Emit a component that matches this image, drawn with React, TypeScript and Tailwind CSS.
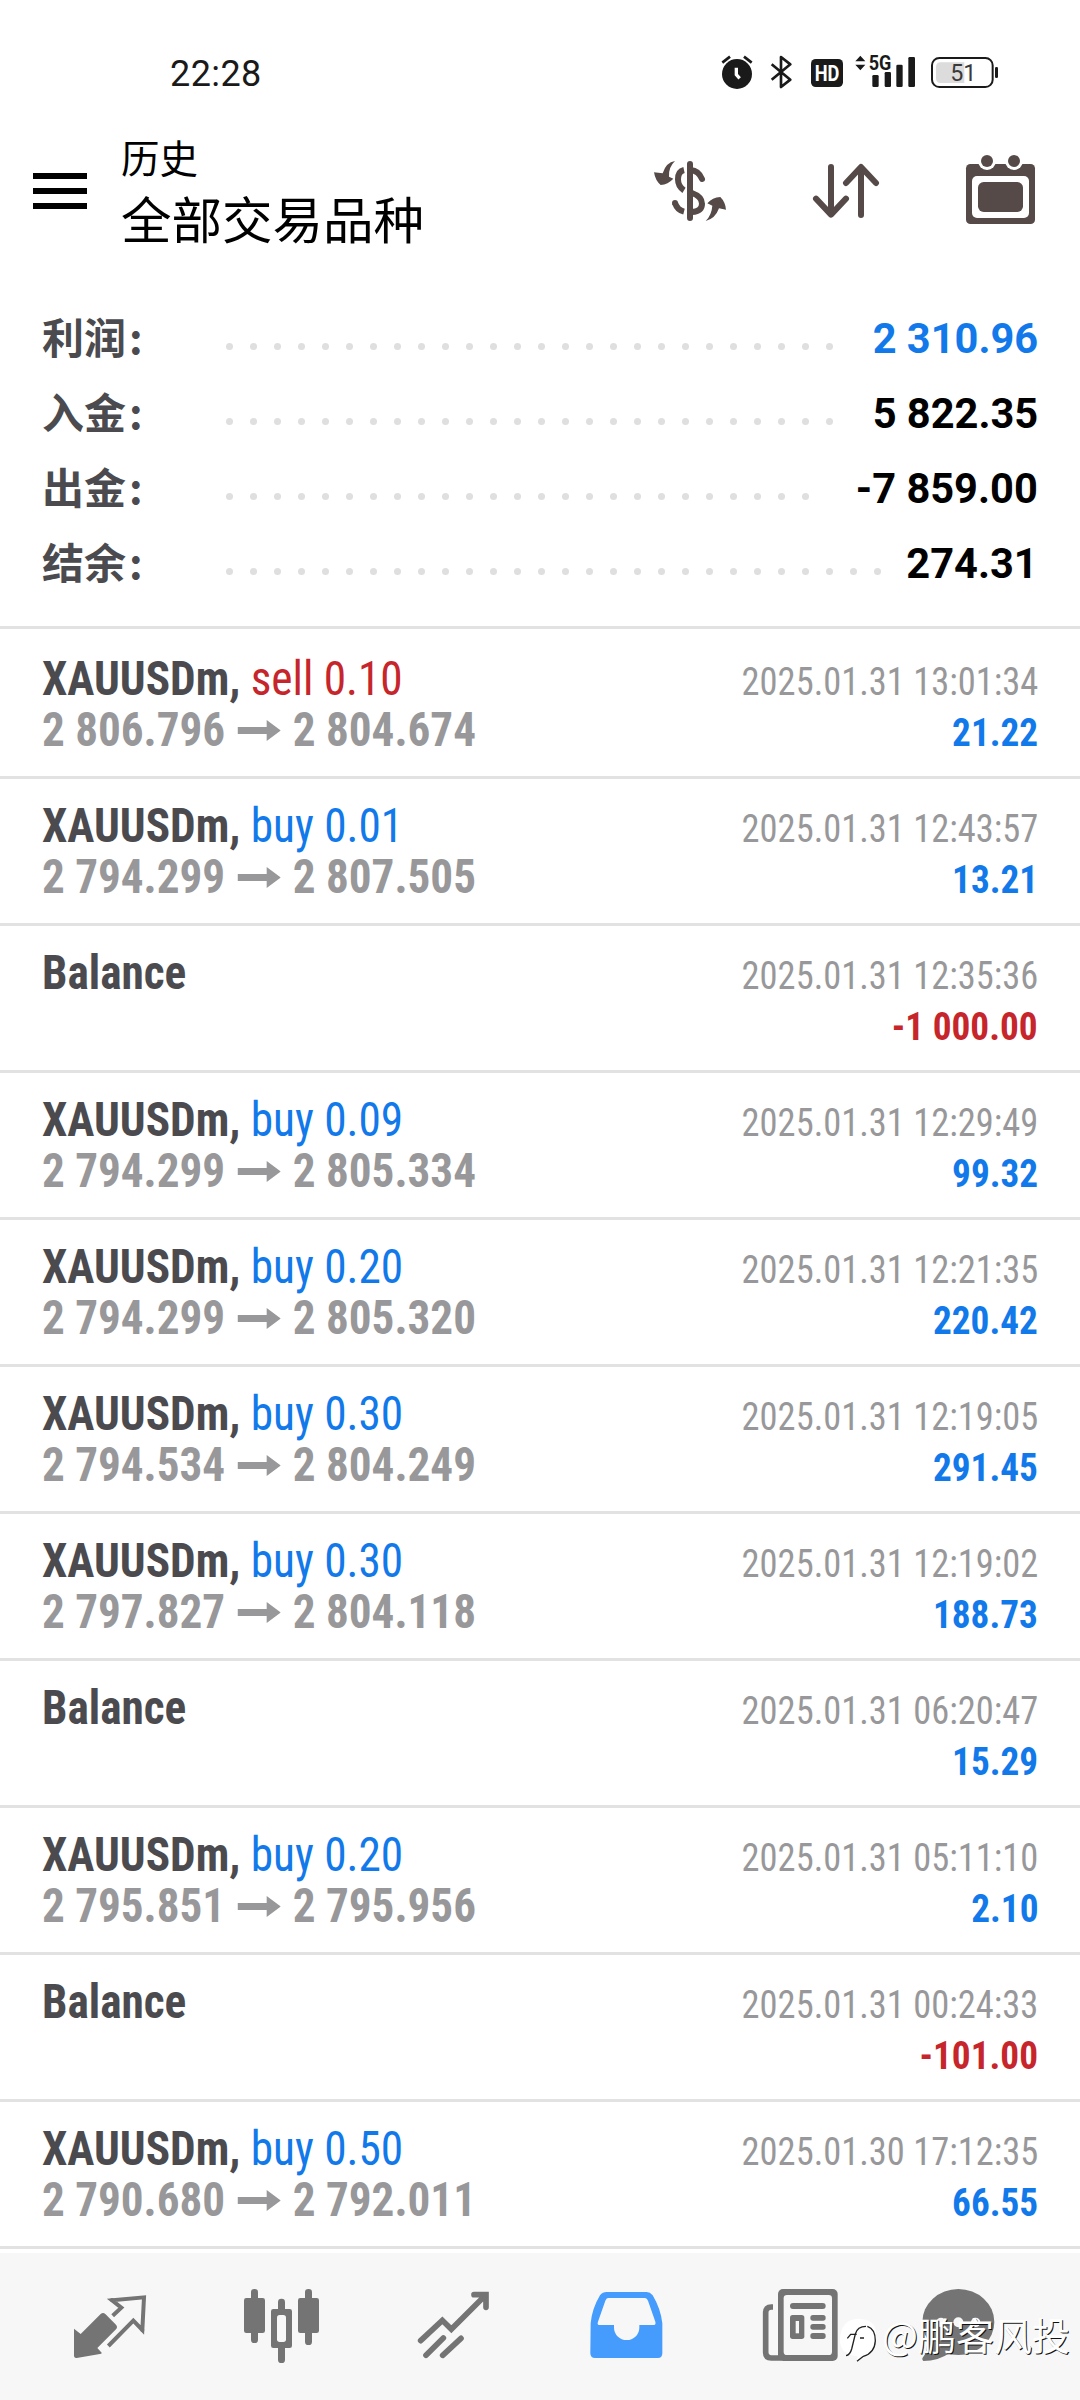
import * as React from 'react'
import clsx from 'clsx'

interface SummaryLine { label: string, value: string, dots: number, positive?: boolean }

interface Deal { side?: 'buy' | 'sell'
               , volume?: string
               , open?: string
               , close?: string
               , time: string
               , profit: string
               }

const summary: SummaryLine[] = [
  { label: '利润', value: '2 310.96', dots: 26, positive: true },
  { label: '入金', value: '5 822.35', dots: 26 },
  { label: '出金', value: '-7 859.00', dots: 25 },
  { label: '结余', value: '274.31', dots: 28 },
]

const deals: Deal[] = [
  { side: 'sell', volume: '0.10', open: '2 806.796', close: '2 804.674', time: '2025.01.31 13:01:34', profit: '21.22' },
  { side: 'buy', volume: '0.01', open: '2 794.299', close: '2 807.505', time: '2025.01.31 12:43:57', profit: '13.21' },
  { time: '2025.01.31 12:35:36', profit: '-1 000.00' },
  { side: 'buy', volume: '0.09', open: '2 794.299', close: '2 805.334', time: '2025.01.31 12:29:49', profit: '99.32' },
  { side: 'buy', volume: '0.20', open: '2 794.299', close: '2 805.320', time: '2025.01.31 12:21:35', profit: '220.42' },
  { side: 'buy', volume: '0.30', open: '2 794.534', close: '2 804.249', time: '2025.01.31 12:19:05', profit: '291.45' },
  { side: 'buy', volume: '0.30', open: '2 797.827', close: '2 804.118', time: '2025.01.31 12:19:02', profit: '188.73' },
  { time: '2025.01.31 06:20:47', profit: '15.29' },
  { side: 'buy', volume: '0.20', open: '2 795.851', close: '2 795.956', time: '2025.01.31 05:11:10', profit: '2.10' },
  { time: '2025.01.31 00:24:33', profit: '-101.00' },
  { side: 'buy', volume: '0.50', open: '2 790.680', close: '2 792.011', time: '2025.01.30 17:12:35', profit: '66.55' },
]

const StatusBar = () =>
  <div className="flex h-[120px] items-start pl-[170px] pr-[81px] text-[#1a1a1a]">
    <span className="mt-[56px] font-['Roboto',sans-serif] text-[36px] leading-9 tracking-[0.4px]">22:28</span>
    <div className="ml-auto mt-[53px] flex h-9 font-['Roboto',sans-serif]">
      <svg className="h-9 w-8" viewBox="303 69 96 108" fill="currentColor">
        <circle cx="351" cy="132" r="45" />
        <path d="M307 98 330 80M395 98 372 80" stroke="currentColor" strokeWidth="8" />
        <path d="M349 113V134L359 145" fill="none" stroke="#fff" strokeWidth="10" />
      </svg>
      <svg className="ml-[17px] h-9 w-[23px]" viewBox="450 69 69 108" fill="none" stroke="currentColor" strokeWidth="8" strokeLinejoin="round">
        <path d="M455 103 511 149 483 171V81L511 103 455 149" />
      </svg>
      <svg className="ml-[18px] h-9 w-8 overflow-visible" viewBox="573 69 96 108">
        <rect x="573" y="87" width="96" height="84" rx="14" fill="currentColor" />
        <text x="621" y="152" textAnchor="middle" textLength="74" lengthAdjust="spacingAndGlyphs" fontSize="64" fontWeight="700" fill="#fff">HD</text>
      </svg>
      <svg className="ml-3 h-9 w-[61px] overflow-visible" viewBox="705 69 183 108" fill="currentColor">
        <path d="M706 94 721 77 736 94ZM706 104 721 121 736 104Z" />
        <text x="746" y="121" textLength="68" lengthAdjust="spacingAndGlyphs" fontSize="63" fontWeight="700">5G</text>
        <rect x="757" y="135" width="19" height="36" rx="4" />
        <rect x="794" y="126" width="19" height="45" rx="4" />
        <rect x="829" y="104" width="19" height="67" rx="4" />
        <rect x="865" y="81" width="20" height="90" rx="4" />
      </svg>
      <svg className="ml-3.5 h-9 w-[69px] overflow-visible" viewBox="930 69 207 108">
        <rect x="936" y="84" width="182" height="87" rx="22" fill="none" stroke="currentColor" strokeWidth="6" />
        <path d="M962 97H1033V159H962Q948 159 948 145V111Q948 97 962 97Z" fill="#dcdcdc" />
        <rect x="1125" y="111" width="9" height="33" rx="4" fill="currentColor" />
        <text x="1030" y="153" textAnchor="middle" fontSize="70" fill="#3a3a3a">51</text>
      </svg>
    </div>
  </div>

const Header = () =>
  <div className="flex h-[181px] items-start pl-[33px] pr-11">
    <div className="mt-[53px] flex w-[54px] flex-col gap-[9px]">
      <div className="h-1.5 bg-black" />
      <div className="h-1.5 bg-black" />
      <div className="h-1.5 bg-black" />
    </div>
    <div className="ml-[34px] mt-3 font-['Noto_Sans_CJK_SC',sans-serif] text-black">
      <div className="text-[38.5px] leading-[48px]">历史</div>
      <div className="mt-1 text-[50.5px] leading-[66px]">全部交易品种</div>
    </div>
    <div className="ml-auto flex text-[#554a48]">
      <svg className="mt-10 h-[62px] w-[74px]" viewBox="99 390 222 186" fill="none" stroke="currentColor" strokeWidth="18">
        <path d="M210 402V564M246 447Q236 422 212 420M165 519" strokeLinecap="round" />
        <path d="M192 420Q174 424 174 448 174 470 192 481M216 489Q246 500 246 521 246 544 216 546M192 545Q172 540 165 519" />
        <circle cx="165" cy="519" r="9" fill="currentColor" stroke="none" />
        <path d="M165 393Q138 397 128 430L102 427Q106 452 122 465 144 463 160 446L147 440Q145 412 165 393ZM257 573Q275 555 277 527L262 520Q277 502 301 501 316 516 318 539L297 535Q286 566 257 573Z" fill="currentColor" stroke="none" />
      </svg>
      <svg className="ml-[85px] mt-[42px] h-[58px] w-[68px]" viewBox="576 396 204 174" fill="none" stroke="currentColor" strokeWidth="18" strokeLinecap="round" strokeLinejoin="round">
        <path d="M633 411V553M588 506 633 554 678 506M723 555V412M678 459 723 411 768 459" />
      </svg>
      <svg className="ml-[85px] mt-[34px] size-[71px]" viewBox="1035 372 213 213" fill="currentColor">
        <rect x="1038" y="402" width="207" height="180" rx="13" />
        <g fill="#fff">
          <circle cx="1101" cy="393" r="27" />
          <circle cx="1182" cy="393" r="27" />
          <rect x="1056" y="438" width="171" height="126" rx="15" />
        </g>
        <circle cx="1101" cy="393" r="18" />
        <circle cx="1182" cy="393" r="18" />
        <rect x="1074" y="456" width="135" height="90" rx="17" />
      </svg>
    </div>
  </div>

const Summary = () =>
  <div className="-mt-1 mb-[3px] h-[332px] border-b-3 border-[#e2e2e2] px-[42px]">
    {summary.map(({label, value, dots, positive}) =>
      <div key={label} className="flex h-[75px] items-baseline text-[42px] leading-[75px]">
        <span className="w-[184px] translate-y-px font-['Noto_Sans_CJK_SC',sans-serif] font-bold text-[#4b4b4f]">{label}<span className="ml-[3px]">:</span></span>
        <span className="flex gap-[17px]">
          {Array.from({length: dots}, (_, i) => <i key={i} className="-translate-y-[3px] size-[7px] rounded-full bg-[#dfdfdf]" />)}
        </span>
        <span className={clsx("ml-auto origin-right scale-x-99 font-['Roboto',sans-serif] font-bold", positive ? 'text-[#1279ea]' : 'text-black')}>{value}</span>
      </div>
    )}
  </div>

const Arrow = () =>
  <svg className="mb-[5px] ml-[13px] mr-[13px] inline-block h-[21px] w-[46px] align-baseline" viewBox="0 0 43 21" preserveAspectRatio="none" fill="currentColor">
    <path d="M0 7H29V0L43 10.500 29 21V14H0Z" />
  </svg>

const DealRow = ({deal}: {deal: Deal}) =>
  <div className="h-[147px] border-b-3 border-[#e2e2e2] px-[42px] pt-[21px] font-['Roboto_Condensed',sans-serif] leading-[51px]">
    <div className="flex h-[51px] items-baseline justify-between">
      <span className="origin-left scale-x-[0.943] text-[48px] font-bold text-[#4b4b4f]">
        {deal.side ?
          <>XAUUSDm, <span className={clsx('font-normal', deal.side == 'buy' ? 'text-[#1279ea]' : 'text-[#c6262b]')}>{deal.side} {deal.volume}</span></>
        : 'Balance'
        }
      </span>
      <span className="origin-right scale-x-[0.935] text-[39px] text-[#98989a]">{deal.time}</span>
    </div>
    <div className="flex h-[51px] items-baseline justify-between">
      <span className="origin-left scale-x-[0.94] text-[48px] font-bold text-[#98989a]">
        {deal.open ? <>{deal.open}<Arrow />{deal.close}</> : '\u00a0'}
      </span>
      <span className={clsx('origin-right scale-x-[0.955] text-[39px] font-bold', deal.profit.startsWith('-') ? 'text-[#c6262b]' : 'text-[#1279ea]')}>{deal.profit}</span>
    </div>
  </div>

const NavBar = () =>
  <div className="relative flex h-[147px] bg-[#f7f7f7] pl-[72px] pt-[35px] text-[#747474]">
    <svg className="size-[76px]" viewBox="36 54 228 228" fill="currentColor">
      <path d="M42 176 62 192 122 132Q129 126 136 132L168 164Q174 171 168 178L112 234 125 248 124 251 50 264Q42 265 42 256Z" />
      <path d="M158 137 184 113 156 91 252 82 247 180 220 152 145 228" fill="none" stroke="currentColor" strokeWidth="12" />
      <circle cx="156" cy="90" r="6" />
      <circle cx="247" cy="180" r="6" />
    </svg>
    <svg className="ml-[95px] size-[76px]" viewBox="549 54 228 228" fill="currentColor">
      <rect x="552" y="84" width="63" height="105" rx="7" />
      <rect x="573" y="57" width="21" height="162" rx="10" />
      <rect x="714" y="84" width="63" height="105" rx="7" />
      <rect x="735" y="57" width="21" height="168" rx="10" />
      <rect x="654" y="86" width="21" height="193" rx="10" />
      <rect x="633" y="117" width="63" height="117" rx="7" />
      <rect x="651" y="135" width="27" height="81" rx="8" fill="#f7f7f7" />
    </svg>
    <svg className="ml-[97px] size-[76px]" viewBox="1068 54 228 228" fill="none" stroke="currentColor" strokeWidth="17" strokeLinecap="round">
      <path d="M1082 212 1147 151 1174 178 1277 75M1242 74H1278V112M1098 256 1150 204M1148 256 1203 205" />
    </svg>
    <svg className="ml-[96px] size-[76px]" viewBox="24 54 228 228" fill="#459cfd" fillRule="evenodd">
      <path d="M32 160Q36 116 60 76 68 66 80 66H200Q210 66 218 76 242 116 247 160V250Q247 264 234 264H45Q31 264 31 250ZM84 84Q79 85 76 92L54 155Q50 165 60 165H102V173A38 37 0 0 0 178 173V165H219Q229 165 226 155L204 92Q201 85 195 84Z" />
    </svg>
    <svg className="ml-[98px] size-[76px]" viewBox="546 54 228 228" fill="currentColor">
      <path d="M579 111H574Q557 111 557 128V247Q557 264 574 264H605" fill="none" stroke="currentColor" strokeWidth="17" />
      <rect x="594" y="57" width="179" height="216" rx="15" />
      <rect x="611" y="75" width="145" height="180" rx="10" fill="#f7f7f7" />
      <rect x="630" y="99" width="107" height="18" rx="9" />
      <rect x="630" y="135" width="43" height="72" rx="8" />
      <rect x="647" y="153" width="10" height="37" fill="#f7f7f7" />
      <rect x="691" y="135" width="46" height="17" rx="8" />
      <rect x="691" y="162" width="46" height="17" rx="8" />
      <rect x="691" y="189" width="46" height="18" rx="8" />
    </svg>
    <svg className="ml-[82px] size-[76px]" viewBox="1020 54 228 228" fill="currentColor">
      <ellipse cx="1135" cy="156" rx="108" ry="99" />
      <path d="M1027 265Q1046 245 1040 205L1110 248Q1075 273 1030 273Q1026 270 1027 265Z" />
      <g fill="#f7f7f7">
        <circle cx="1083" cy="157" r="14" />
        <circle cx="1135" cy="157" r="15" />
        <circle cx="1187" cy="157" r="14" />
      </g>
    </svg>
    <div className="absolute left-[839px] top-[56px] flex items-start text-white">
      <svg className="mt-2.5 h-11 w-[38px]" viewBox="777 150 114 132" fill="none" stroke="#222" strokeWidth="4">
        <path d="M835 150Q888 150 888 195 888 250 845 262L830 276 833 262Q778 258 780 210 783 150 835 150Z" fill="#fff" stroke="none" />
        <path d="M858 172Q832 172 826 195L815 240Q810 258 798 260M802 208 812 196H830M840 207H852M862 172Q886 180 886 215 884 252 850 262L831 277" />
      </svg>
      <span className="ml-[5px] font-['Noto_Sans_CJK_SC',sans-serif] text-[38px] leading-[50px] whitespace-nowrap [text-shadow:1px_1px_0_#111]">@鹏客风投</span>
    </div>
  </div>

export default function App() {
  return (
    <div className="flex h-[2400px] w-[1080px] flex-col overflow-hidden bg-white">
      <StatusBar />
      <Header />
      <Summary />
      <div className="h-[1621px]">
        {deals.map(deal => <DealRow key={deal.time} deal={deal} />)}
      </div>
      <NavBar />
    </div>
  )
}
